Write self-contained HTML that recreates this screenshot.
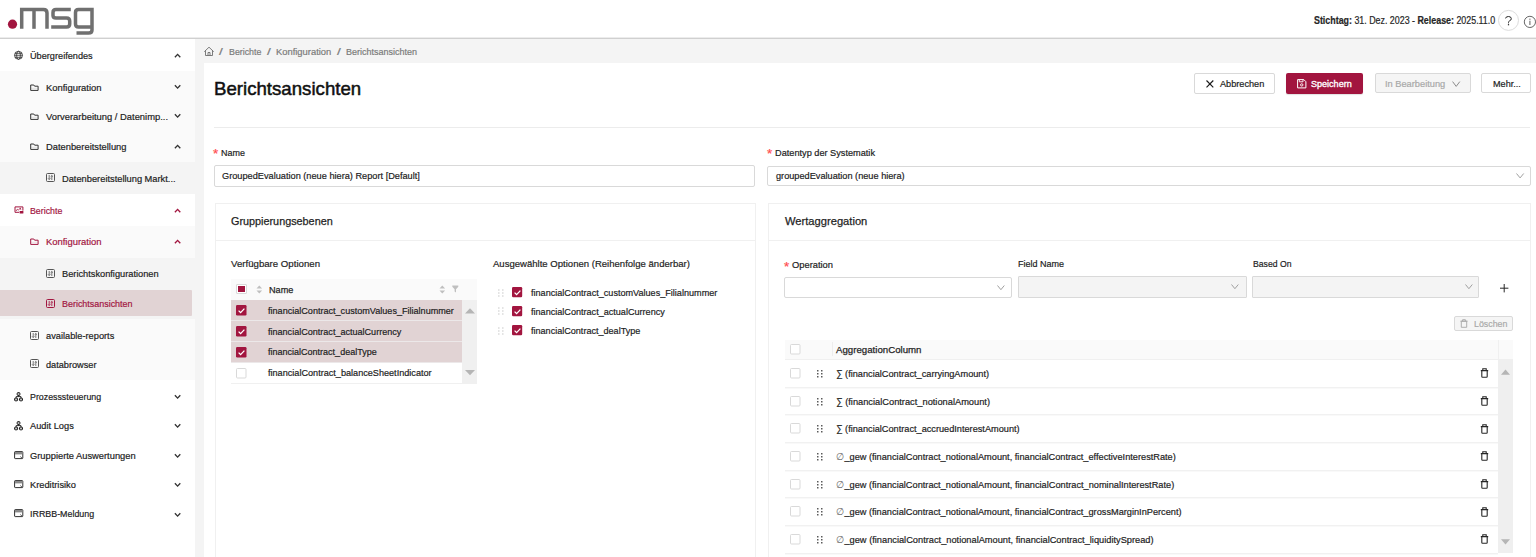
<!DOCTYPE html>
<html><head><meta charset="utf-8"><style>
html,body{margin:0;padding:0;width:1536px;height:557px;overflow:hidden;background:#fff;font-family:"Liberation Sans", sans-serif;}
span{white-space:pre;transform-origin:0 0;display:block;}
svg{overflow:visible}
</style></head><body>
<div style="position:absolute;left:0px;top:37px;width:1536px;height:1px;background:#ececec"></div><div style="position:absolute;left:0px;top:38px;width:1536px;height:1px;background:#d0d0d0"></div><div style="position:absolute;left:195px;top:39px;width:1341px;height:518px;background:#f4f4f4"></div><div style="position:absolute;left:204px;top:63px;width:1332px;height:494px;background:#fff"></div><div style="position:absolute;left:0px;top:39px;width:195px;height:518px;background:#fff"></div><svg style="position:absolute;left:0px;top:0px" width="100" height="38" viewBox="0 0 100 38">
<circle cx="12.5" cy="24.2" r="4.6" fill="#a2153f"/>
<g fill="none" stroke="#707070" stroke-width="3.5" stroke-linejoin="miter">
<path d="M21.7 28.8 V9.6 H43.5 Q47 9.6 47 13 V28.8"/>
<path d="M34 9.6 V28.8"/>
<path d="M70.8 9.6 H56 Q53 9.6 53 12.5 V15.5 Q53 18 56 18 H66.5 Q69.7 18 69.7 21 V24 Q69.7 27 66.5 27 H51.2"/>
<path d="M76.5 33.1 H88.5 Q92 33.1 92 30 V9.6 H78.5 Q75.5 9.6 75.5 12.5 V24 Q75.5 27 78.5 27 H92"/>
</g></svg><svg style="position:absolute;left:1498px;top:10px" width="21" height="21" viewBox="0 0 21 21"><circle cx="10.5" cy="10.4" r="10" fill="#fff" stroke="#dcdcdc" stroke-width="1"/><path d="M7.6 8.4 Q7.7 6.5 10.5 6.5 Q13.3 6.5 13.3 8.7 Q13.3 10.2 11.5 10.9 Q10.5 11.3 10.5 12.5 V13.3" fill="none" stroke="#262626" stroke-width="1"/><rect x="9.9" y="14.1" width="1.2" height="1.2" fill="#262626"/></svg><svg style="position:absolute;left:1523px;top:15px" width="14" height="14" viewBox="0 0 14 14"><circle cx="6.9" cy="6.9" r="5.6" fill="none" stroke="#666" stroke-width="1"/><rect x="6.3" y="5.7" width="1.2" height="4.3" fill="#777"/><rect x="6.3" y="3.6" width="1.2" height="1.2" fill="#777"/></svg><div style="position:absolute;left:0px;top:70.7px;width:195px;height:91.3px;background:#fafafa"></div><div style="position:absolute;left:0px;top:162px;width:195px;height:32.3px;background:#f4f4f4"></div><div style="position:absolute;left:0px;top:226px;width:195px;height:32px;background:#fafafa"></div><div style="position:absolute;left:0px;top:258px;width:195px;height:61px;background:#f4f4f4"></div><div style="position:absolute;left:0px;top:290px;width:191.8px;height:25.7px;background:#e1d3d4;border-radius:0 1px 1px 0"></div><div style="position:absolute;left:0px;top:319px;width:195px;height:61.4px;background:#fafafa"></div><svg style="position:absolute;left:173.8px;top:52.8px" width="7.5" height="6" viewBox="0 0 7.5 6"><path d="M0.9 4.3 L3.6 1.4 L6.3 4.3" fill="none" stroke="#333" stroke-width="1.35"/></svg><svg style="position:absolute;left:173.8px;top:83.8px" width="7.5" height="6" viewBox="0 0 7.5 6"><path d="M0.9 1.2 L3.6 4.1 L6.3 1.2" fill="none" stroke="#333" stroke-width="1.35"/></svg><svg style="position:absolute;left:173.8px;top:113.0px" width="7.5" height="6" viewBox="0 0 7.5 6"><path d="M0.9 1.2 L3.6 4.1 L6.3 1.2" fill="none" stroke="#333" stroke-width="1.35"/></svg><svg style="position:absolute;left:173.8px;top:143.8px" width="7.5" height="6" viewBox="0 0 7.5 6"><path d="M0.9 4.3 L3.6 1.4 L6.3 4.3" fill="none" stroke="#333" stroke-width="1.35"/></svg><svg style="position:absolute;left:173.8px;top:207.8px" width="7.5" height="6" viewBox="0 0 7.5 6"><path d="M0.9 4.3 L3.6 1.4 L6.3 4.3" fill="none" stroke="#a2153f" stroke-width="1.35"/></svg><svg style="position:absolute;left:173.8px;top:239.3px" width="7.5" height="6" viewBox="0 0 7.5 6"><path d="M0.9 4.3 L3.6 1.4 L6.3 4.3" fill="none" stroke="#a2153f" stroke-width="1.35"/></svg><svg style="position:absolute;left:173.8px;top:393.8px" width="7.5" height="6" viewBox="0 0 7.5 6"><path d="M0.9 1.2 L3.6 4.1 L6.3 1.2" fill="none" stroke="#333" stroke-width="1.35"/></svg><svg style="position:absolute;left:173.8px;top:423.3px" width="7.5" height="6" viewBox="0 0 7.5 6"><path d="M0.9 1.2 L3.6 4.1 L6.3 1.2" fill="none" stroke="#333" stroke-width="1.35"/></svg><svg style="position:absolute;left:173.8px;top:453.0px" width="7.5" height="6" viewBox="0 0 7.5 6"><path d="M0.9 1.2 L3.6 4.1 L6.3 1.2" fill="none" stroke="#333" stroke-width="1.35"/></svg><svg style="position:absolute;left:173.8px;top:482.3px" width="7.5" height="6" viewBox="0 0 7.5 6"><path d="M0.9 1.2 L3.6 4.1 L6.3 1.2" fill="none" stroke="#333" stroke-width="1.35"/></svg><svg style="position:absolute;left:173.8px;top:511.59999999999997px" width="7.5" height="6" viewBox="0 0 7.5 6"><path d="M0.9 1.2 L3.6 4.1 L6.3 1.2" fill="none" stroke="#333" stroke-width="1.35"/></svg><svg style="position:absolute;left:14px;top:51px" width="10" height="10" viewBox="0 0 10 10"><g fill="none" stroke="#262626" stroke-width="0.75"><circle cx="4.5" cy="4.3" r="4.0"/><ellipse cx="4.5" cy="4.3" rx="1.9" ry="4.0"/><path d="M0.5 4.3 H8.5 M0.9 2.3 H8.1 M0.9 6.3 H8.1"/></g></svg><svg style="position:absolute;left:30.2px;top:83.6px" width="10" height="8" viewBox="0 0 10 8"><path d="M0.7 1 H3.8 L4.6 2.2 H8.1 V6.4 H0.7 Z" fill="none" stroke="#333" stroke-width="1" stroke-linejoin="round"/><path d="M1.2 4.3 H7.6" stroke="#333" stroke-opacity="0.15" stroke-width="0.8"/></svg><svg style="position:absolute;left:30.2px;top:112.8px" width="10" height="8" viewBox="0 0 10 8"><path d="M0.7 1 H3.8 L4.6 2.2 H8.1 V6.4 H0.7 Z" fill="none" stroke="#333" stroke-width="1" stroke-linejoin="round"/><path d="M1.2 4.3 H7.6" stroke="#333" stroke-opacity="0.15" stroke-width="0.8"/></svg><svg style="position:absolute;left:30.2px;top:143px" width="10" height="8" viewBox="0 0 10 8"><path d="M0.7 1 H3.8 L4.6 2.2 H8.1 V6.4 H0.7 Z" fill="none" stroke="#333" stroke-width="1" stroke-linejoin="round"/><path d="M1.2 4.3 H7.6" stroke="#333" stroke-opacity="0.15" stroke-width="0.8"/></svg><svg style="position:absolute;left:30.2px;top:238px" width="10" height="8" viewBox="0 0 10 8"><path d="M0.7 1 H3.8 L4.6 2.2 H8.1 V6.4 H0.7 Z" fill="none" stroke="#a2153f" stroke-width="1" stroke-linejoin="round"/><path d="M1.2 4.3 H7.6" stroke="#a2153f" stroke-opacity="0.15" stroke-width="0.8"/></svg><svg style="position:absolute;left:46.3px;top:173.2px" width="9" height="9" viewBox="0 0 9 9"><rect x="0.5" y="0.5" width="8" height="8" rx="1" fill="none" stroke="#555" stroke-width="1"/><path d="M3.2 2 V6.5 M2 5.3 L3.2 6.5 L4.4 5.3 M5.8 7 V2.5 M4.6 3.7 L5.8 2.5 L7 3.7" fill="none" stroke="#555" stroke-width="0.8"/></svg><svg style="position:absolute;left:46.3px;top:269.2px" width="9" height="9" viewBox="0 0 9 9"><rect x="0.5" y="0.5" width="8" height="8" rx="1" fill="none" stroke="#555" stroke-width="1"/><path d="M3.2 2 V6.5 M2 5.3 L3.2 6.5 L4.4 5.3 M5.8 7 V2.5 M4.6 3.7 L5.8 2.5 L7 3.7" fill="none" stroke="#555" stroke-width="0.8"/></svg><svg style="position:absolute;left:46.3px;top:298.6px" width="9" height="9" viewBox="0 0 9 9"><rect x="0.5" y="0.5" width="8" height="8" rx="1" fill="none" stroke="#a2153f" stroke-width="1"/><path d="M3.2 2 V6.5 M2 5.3 L3.2 6.5 L4.4 5.3 M5.8 7 V2.5 M4.6 3.7 L5.8 2.5 L7 3.7" fill="none" stroke="#a2153f" stroke-width="0.8"/></svg><svg style="position:absolute;left:30.2px;top:330.6px" width="9" height="9" viewBox="0 0 9 9"><rect x="0.5" y="0.5" width="8" height="8" rx="1" fill="none" stroke="#555" stroke-width="1"/><path d="M3.2 2 V6.5 M2 5.3 L3.2 6.5 L4.4 5.3 M5.8 7 V2.5 M4.6 3.7 L5.8 2.5 L7 3.7" fill="none" stroke="#555" stroke-width="0.8"/></svg><svg style="position:absolute;left:30.2px;top:359.4px" width="9" height="9" viewBox="0 0 9 9"><rect x="0.5" y="0.5" width="8" height="8" rx="1" fill="none" stroke="#555" stroke-width="1"/><path d="M3.2 2 V6.5 M2 5.3 L3.2 6.5 L4.4 5.3 M5.8 7 V2.5 M4.6 3.7 L5.8 2.5 L7 3.7" fill="none" stroke="#555" stroke-width="0.8"/></svg><svg style="position:absolute;left:13.5px;top:205.5px" width="10" height="8" viewBox="0 0 10 8"><path d="M5 6.3 H1 V0.9 H8.9 V4.6" fill="none" stroke="#a2153f" stroke-width="1"/><path d="M2 5 L3.3 3.2 L4.4 4.2 L6.4 1.9 L6.8 3.8" fill="none" stroke="#a2153f" stroke-width="0.8"/><rect x="5.6" y="4.9" width="3.8" height="2.6" rx="0.6" fill="#a2153f"/></svg><svg style="position:absolute;left:14px;top:391.9px" width="10" height="10" viewBox="0 0 10 10"><g fill="#bbb" stroke="#1c1c1c" stroke-width="1"><rect x="3.2" y="0.6" width="2.7" height="2.9" rx="0.9"/><rect x="0.6" y="6.1" width="3" height="2.7" rx="0.7"/><rect x="5.5" y="6.1" width="3" height="2.7" rx="0.7"/></g><path d="M4.55 3.5 V4.6 M2.1 6.1 V4.6 H7 V6.1" fill="none" stroke="#1c1c1c" stroke-width="0.9"/></svg><svg style="position:absolute;left:14px;top:421.3px" width="10" height="10" viewBox="0 0 10 10"><g fill="#bbb" stroke="#1c1c1c" stroke-width="1"><rect x="3.2" y="0.6" width="2.7" height="2.9" rx="0.9"/><rect x="0.6" y="6.1" width="3" height="2.7" rx="0.7"/><rect x="5.5" y="6.1" width="3" height="2.7" rx="0.7"/></g><path d="M4.55 3.5 V4.6 M2.1 6.1 V4.6 H7 V6.1" fill="none" stroke="#1c1c1c" stroke-width="0.9"/></svg><svg style="position:absolute;left:13.8px;top:450.8px" width="10" height="9" viewBox="0 0 10 9"><rect x="0.6" y="0.6" width="8.2" height="7" rx="0.6" fill="none" stroke="#262626" stroke-width="0.95"/><rect x="1" y="1" width="7.4" height="2.4" fill="#8a8a8a"/><path d="M6.3 5.6 L8.3 7.4" fill="none" stroke="#555" stroke-width="1"/></svg><svg style="position:absolute;left:13.8px;top:480px" width="10" height="9" viewBox="0 0 10 9"><rect x="0.6" y="0.6" width="8.2" height="7" rx="0.6" fill="none" stroke="#262626" stroke-width="0.95"/><rect x="1" y="1" width="7.4" height="2.4" fill="#8a8a8a"/><path d="M6.3 5.6 L8.3 7.4" fill="none" stroke="#555" stroke-width="1"/></svg><svg style="position:absolute;left:13.8px;top:509.2px" width="10" height="9" viewBox="0 0 10 9"><rect x="0.6" y="0.6" width="8.2" height="7" rx="0.6" fill="none" stroke="#262626" stroke-width="0.95"/><rect x="1" y="1" width="7.4" height="2.4" fill="#8a8a8a"/><path d="M6.3 5.6 L8.3 7.4" fill="none" stroke="#555" stroke-width="1"/></svg><svg style="position:absolute;left:203px;top:46px" width="12" height="11" viewBox="0 0 12 11"><path d="M1.3 5.7 L6 1.2 L10.7 5.7 M2.5 4.6 V9.5 H9.5 V4.6 M5 9.5 V6.5 H7 V9.5" fill="none" stroke="#666" stroke-width="0.85" stroke-linejoin="round"/></svg><div style="position:absolute;left:1194px;top:73px;width:81px;height:20.5px;box-sizing:border-box;border:1px solid #d9d9d9;border-radius:2px;background:#fff"></div><svg style="position:absolute;left:1205.8px;top:80.2px" width="8" height="8" viewBox="0 0 8 8"><path d="M0.5 0.5 L7.3 7.3 M7.3 0.5 L0.5 7.3" stroke="#1c1c1c" stroke-width="1.2"/></svg><div style="position:absolute;left:1286.3px;top:73px;width:76.4px;height:20.5px;background:#a2153f;border-radius:2px;box-shadow:0 1px 1px rgba(0,0,0,0.12)"></div><svg style="position:absolute;left:1297px;top:79px" width="9.5" height="9.5" viewBox="0 0 9.5 9.5"><path d="M0.6 0.6 H6.8 L8.9 2.7 V8.9 H0.6 Z" fill="none" stroke="#fff" stroke-width="1"/><path d="M2.3 0.6 V2.8 H6 V0.6" fill="none" stroke="#fff" stroke-width="0.9"/><circle cx="4.75" cy="5.9" r="1.2" fill="none" stroke="#fff" stroke-width="0.9"/></svg><div style="position:absolute;left:1374.5px;top:73.4px;width:96.1px;height:20px;box-sizing:border-box;border:1px solid #d9d9d9;border-radius:2px;background:#f5f5f5"></div><svg style="position:absolute;left:1451.6px;top:80.8px" width="8.5" height="6.5" viewBox="0 0 8.5 6.5"><path d="M0.6 0.6 L4.2 5.4 L7.8 0.6" fill="none" stroke="#8c8c8c" stroke-width="1"/></svg><div style="position:absolute;left:1481.4px;top:73.4px;width:49.3px;height:20px;box-sizing:border-box;border:1px solid #d9d9d9;border-radius:2px;background:#fff"></div><div style="position:absolute;left:214px;top:127px;width:1316px;height:1px;background:#ececec"></div><div style="position:absolute;left:214.4px;top:165.3px;width:541.1px;height:21.3px;box-sizing:border-box;border:1px solid #d9d9d9;border-radius:2px;background:#fff"></div><div style="position:absolute;left:767.2px;top:165.5px;width:763.5px;height:20.1px;box-sizing:border-box;border:1px solid #d9d9d9;border-radius:2px;background:#fff"></div><svg style="position:absolute;left:1515.8px;top:172.8px" width="8.2" height="6" viewBox="0 0 8.2 6"><path d="M0.5 0.5 L4.1 4.9 L7.7 0.5" fill="none" stroke="#a0a0a0" stroke-width="1"/></svg><div style="position:absolute;left:214.5px;top:203.4px;width:541.2px;height:360px;box-sizing:border-box;border:1px solid #f0f0f0;background:#fff"></div><div style="position:absolute;left:214.5px;top:240.2px;width:541.2px;height:1px;background:#f0f0f0"></div><div style="position:absolute;left:767.5px;top:203.4px;width:763.3px;height:360px;box-sizing:border-box;border:1px solid #f0f0f0;background:#fff"></div><div style="position:absolute;left:767.5px;top:240.2px;width:763.3px;height:1px;background:#f0f0f0"></div><div style="position:absolute;left:230.9px;top:279.3px;width:246.1px;height:20.5px;background:#fafafa"></div><div style="position:absolute;left:236.1px;top:284.2px;width:11px;height:10px;box-sizing:border-box;border:1px solid #d9d9d9;border-radius:1px;background:#fff"></div><div style="position:absolute;left:238.3px;top:286.3px;width:6.6px;height:5.8px;background:#a2153f"></div><svg style="position:absolute;left:255.6px;top:284.6px" width="7" height="10" viewBox="0 0 7 10"><path d="M0.5 3.6 L3.3 0.6 L6.1 3.6 Z M0.5 5.6 L3.3 8.6 L6.1 5.6 Z" fill="#bfbfbf"/></svg><svg style="position:absolute;left:439.2px;top:284.6px" width="7" height="10" viewBox="0 0 7 10"><path d="M0.5 3.6 L3.3 0.6 L6.1 3.6 Z M0.5 5.6 L3.3 8.6 L6.1 5.6 Z" fill="#bfbfbf"/></svg><svg style="position:absolute;left:452.2px;top:285.2px" width="7" height="8" viewBox="0 0 7 8"><path d="M0.3 0.5 H6.3 V1.8 L4 4.3 V7.5 L2.6 6.6 V4.3 L0.3 1.8 Z" fill="#bfbfbf"/></svg><div style="position:absolute;left:230.9px;top:299.8px;width:231.1px;height:20.0px;background:#e1d3d4"></div><div style="position:absolute;left:230.9px;top:319.8px;width:231.1px;height:1.2px;background:#ece8e9"></div><svg style="position:absolute;left:236.1px;top:304.8px" width="10.5" height="10.5" viewBox="0 0 10.5 10.5"><rect x="0" y="0" width="10.5" height="10.5" rx="1.2" fill="#a2153f"/><path d="M2.6 5.6 L4.6 7.6 L8.4 3.6" fill="none" stroke="#fff" stroke-width="1.3"/></svg><div style="position:absolute;left:230.9px;top:320.8px;width:231.1px;height:19.80000000000001px;background:#e1d3d4"></div><div style="position:absolute;left:230.9px;top:340.6px;width:231.1px;height:1.2px;background:#ece8e9"></div><svg style="position:absolute;left:236.1px;top:325.70000000000005px" width="10.5" height="10.5" viewBox="0 0 10.5 10.5"><rect x="0" y="0" width="10.5" height="10.5" rx="1.2" fill="#a2153f"/><path d="M2.6 5.6 L4.6 7.6 L8.4 3.6" fill="none" stroke="#fff" stroke-width="1.3"/></svg><div style="position:absolute;left:230.9px;top:341.6px;width:231.1px;height:20.0px;background:#e1d3d4"></div><div style="position:absolute;left:230.9px;top:361.6px;width:231.1px;height:1.2px;background:#ece8e9"></div><svg style="position:absolute;left:236.1px;top:346.6px" width="10.5" height="10.5" viewBox="0 0 10.5 10.5"><rect x="0" y="0" width="10.5" height="10.5" rx="1.2" fill="#a2153f"/><path d="M2.6 5.6 L4.6 7.6 L8.4 3.6" fill="none" stroke="#fff" stroke-width="1.3"/></svg><div style="position:absolute;left:230.9px;top:362.6px;width:231.1px;height:20.19999999999999px;background:#fff"></div><div style="position:absolute;left:230.9px;top:382.8px;width:231.1px;height:1.2px;background:#f0f0f0"></div><svg style="position:absolute;left:236.1px;top:367.70000000000005px" width="10.5" height="10.5" viewBox="0 0 10.5 10.5"><rect x="0.5" y="0.5" width="9.5" height="9.5" rx="1" fill="#fff" stroke="#d9d9d9" stroke-width="1"/></svg><div style="position:absolute;left:462px;top:299.8px;width:15px;height:83.9px;background:#f0f0f0"></div><svg style="position:absolute;left:463.5px;top:307px" width="12" height="8" viewBox="0 0 12 8"><path d="M1 6.5 L6 1.2 L11 6.5 Z" fill="#b5b5b5"/></svg><svg style="position:absolute;left:463.5px;top:368.5px" width="12" height="8" viewBox="0 0 12 8"><path d="M1 1 L6 6.3 L11 1 Z" fill="#b5b5b5"/></svg><svg style="position:absolute;left:497.8px;top:288.5px" width="6" height="8" viewBox="0 0 6 8"><g fill="#c8c8c8"><rect x="0.3" y="0.3" width="1.1" height="1.4"/><rect x="4.3" y="0.3" width="1.1" height="1.4"/><rect x="0.3" y="3.3" width="1.1" height="1.4"/><rect x="4.3" y="3.3" width="1.1" height="1.4"/><rect x="0.3" y="6.3" width="1.1" height="1.4"/><rect x="4.3" y="6.3" width="1.1" height="1.4"/></g></svg><svg style="position:absolute;left:512px;top:287.2px" width="10.2" height="10.2" viewBox="0 0 10.2 10.2"><rect x="0" y="0" width="10.2" height="10.2" rx="1.2" fill="#a2153f"/><path d="M2.6 5.6 L4.6 7.6 L8.4 3.6" fill="none" stroke="#fff" stroke-width="1.3"/></svg><svg style="position:absolute;left:497.8px;top:307.4px" width="6" height="8" viewBox="0 0 6 8"><g fill="#c8c8c8"><rect x="0.3" y="0.3" width="1.1" height="1.4"/><rect x="4.3" y="0.3" width="1.1" height="1.4"/><rect x="0.3" y="3.3" width="1.1" height="1.4"/><rect x="4.3" y="3.3" width="1.1" height="1.4"/><rect x="0.3" y="6.3" width="1.1" height="1.4"/><rect x="4.3" y="6.3" width="1.1" height="1.4"/></g></svg><svg style="position:absolute;left:512px;top:306.09999999999997px" width="10.2" height="10.2" viewBox="0 0 10.2 10.2"><rect x="0" y="0" width="10.2" height="10.2" rx="1.2" fill="#a2153f"/><path d="M2.6 5.6 L4.6 7.6 L8.4 3.6" fill="none" stroke="#fff" stroke-width="1.3"/></svg><svg style="position:absolute;left:497.8px;top:326.7px" width="6" height="8" viewBox="0 0 6 8"><g fill="#c8c8c8"><rect x="0.3" y="0.3" width="1.1" height="1.4"/><rect x="4.3" y="0.3" width="1.1" height="1.4"/><rect x="0.3" y="3.3" width="1.1" height="1.4"/><rect x="4.3" y="3.3" width="1.1" height="1.4"/><rect x="0.3" y="6.3" width="1.1" height="1.4"/><rect x="4.3" y="6.3" width="1.1" height="1.4"/></g></svg><svg style="position:absolute;left:512px;top:325.4px" width="10.2" height="10.2" viewBox="0 0 10.2 10.2"><rect x="0" y="0" width="10.2" height="10.2" rx="1.2" fill="#a2153f"/><path d="M2.6 5.6 L4.6 7.6 L8.4 3.6" fill="none" stroke="#fff" stroke-width="1.3"/></svg><div style="position:absolute;left:784.4px;top:277.2px;width:228px;height:20.6px;box-sizing:border-box;border:1px solid #d9d9d9;border-radius:2px;background:#fff"></div><svg style="position:absolute;left:997.2px;top:284.6px" width="8" height="6" viewBox="0 0 8 6"><path d="M0.5 0.5 L3.9 4.7 L7.3 0.5" fill="none" stroke="#a0a0a0" stroke-width="1"/></svg><div style="position:absolute;left:1018.3px;top:276.2px;width:228.4px;height:21.6px;box-sizing:border-box;border:1px solid #d9d9d9;border-radius:1px;background:#f4f4f4"></div><svg style="position:absolute;left:1231px;top:284.3px" width="8" height="6" viewBox="0 0 8 6"><path d="M0.5 0.5 L3.9 4.7 L7.3 0.5" fill="none" stroke="#a0a0a0" stroke-width="1"/></svg><div style="position:absolute;left:1252.3px;top:276.2px;width:227.2px;height:21.5px;box-sizing:border-box;border:1px solid #d9d9d9;border-radius:1px;background:#f4f4f4"></div><svg style="position:absolute;left:1464.5px;top:284.3px" width="8" height="6" viewBox="0 0 8 6"><path d="M0.5 0.5 L3.9 4.7 L7.3 0.5" fill="none" stroke="#a0a0a0" stroke-width="1"/></svg><svg style="position:absolute;left:1499.6px;top:284px" width="8.4" height="8.4" viewBox="0 0 8.4 8.4"><path d="M4.2 0 V8.4 M0 4.2 H8.4" stroke="#262626" stroke-width="1"/></svg><div style="position:absolute;left:1454.3px;top:315.5px;width:58.3px;height:15.2px;box-sizing:border-box;border:1px solid #d9d9d9;border-radius:2px;background:#f5f5f5"></div><svg style="position:absolute;left:1460px;top:318.5px" width="8" height="9" viewBox="0 0 8 9"><path d="M1.3 2.2 H6.7 V8.3 H1.3 Z M0.4 2.2 H7.6 M2.6 2.2 V0.7 H5.4 V2.2" fill="none" stroke="#a8a8a8" stroke-width="0.9"/></svg><div style="position:absolute;left:785px;top:339.6px;width:727.7px;height:19.8px;background:#fafafa"></div><div style="position:absolute;left:785px;top:359px;width:713px;height:1px;background:#f0f0f0"></div><div style="position:absolute;left:832.3px;top:342.2px;width:1px;height:14px;background:#ededed"></div><div style="position:absolute;left:1497.7px;top:339.6px;width:1px;height:19.8px;background:#f0f0f0"></div><svg style="position:absolute;left:790.2px;top:344.1px" width="10.5" height="10.5" viewBox="0 0 10.5 10.5"><rect x="0.5" y="0.5" width="9.5" height="9.5" rx="1" fill="#fff" stroke="#d9d9d9" stroke-width="1"/></svg><div style="position:absolute;left:785px;top:387px;width:713px;height:1px;background:#f1f1f1"></div><div style="position:absolute;left:785px;top:388px;width:713px;height:1px;background:#f9f9f9"></div><svg style="position:absolute;left:790.2px;top:368.03px" width="10.5" height="10.5" viewBox="0 0 10.5 10.5"><rect x="0.5" y="0.5" width="9.5" height="9.5" rx="1" fill="#fff" stroke="#d9d9d9" stroke-width="1"/></svg><svg style="position:absolute;left:816.8px;top:369.92999999999995px" width="6" height="8" viewBox="0 0 6 8"><g fill="#333"><rect x="0.2" y="0" width="1.2" height="1.5"/><rect x="4.2" y="0" width="1.2" height="1.5"/><rect x="0.2" y="3" width="1.2" height="1.5"/><rect x="4.2" y="3" width="1.2" height="1.5"/><rect x="0.2" y="6" width="1.2" height="1.5"/><rect x="4.2" y="6" width="1.2" height="1.5"/></g></svg><svg style="position:absolute;left:1480.4px;top:368.42999999999995px" width="9" height="10" viewBox="0 0 9 10"><path d="M1.8 2.6 H7.2 V8.6 Q7.2 9.3 6.5 9.3 H2.5 Q1.8 9.3 1.8 8.6 Z M0.8 2.6 H8.2 M2.8 2.6 V0.8 H6.2 V2.6" fill="none" stroke="#262626" stroke-width="1.1"/></svg><div style="position:absolute;left:785px;top:414px;width:713px;height:1px;background:#f1f1f1"></div><div style="position:absolute;left:785px;top:415px;width:713px;height:1px;background:#f9f9f9"></div><svg style="position:absolute;left:790.2px;top:395.69px" width="10.5" height="10.5" viewBox="0 0 10.5 10.5"><rect x="0.5" y="0.5" width="9.5" height="9.5" rx="1" fill="#fff" stroke="#d9d9d9" stroke-width="1"/></svg><svg style="position:absolute;left:816.8px;top:397.59px" width="6" height="8" viewBox="0 0 6 8"><g fill="#333"><rect x="0.2" y="0" width="1.2" height="1.5"/><rect x="4.2" y="0" width="1.2" height="1.5"/><rect x="0.2" y="3" width="1.2" height="1.5"/><rect x="4.2" y="3" width="1.2" height="1.5"/><rect x="0.2" y="6" width="1.2" height="1.5"/><rect x="4.2" y="6" width="1.2" height="1.5"/></g></svg><svg style="position:absolute;left:1480.4px;top:396.09px" width="9" height="10" viewBox="0 0 9 10"><path d="M1.8 2.6 H7.2 V8.6 Q7.2 9.3 6.5 9.3 H2.5 Q1.8 9.3 1.8 8.6 Z M0.8 2.6 H8.2 M2.8 2.6 V0.8 H6.2 V2.6" fill="none" stroke="#262626" stroke-width="1.1"/></svg><div style="position:absolute;left:785px;top:442px;width:713px;height:1px;background:#f1f1f1"></div><div style="position:absolute;left:785px;top:443px;width:713px;height:1px;background:#f9f9f9"></div><svg style="position:absolute;left:790.2px;top:423.34999999999997px" width="10.5" height="10.5" viewBox="0 0 10.5 10.5"><rect x="0.5" y="0.5" width="9.5" height="9.5" rx="1" fill="#fff" stroke="#d9d9d9" stroke-width="1"/></svg><svg style="position:absolute;left:816.8px;top:425.24999999999994px" width="6" height="8" viewBox="0 0 6 8"><g fill="#333"><rect x="0.2" y="0" width="1.2" height="1.5"/><rect x="4.2" y="0" width="1.2" height="1.5"/><rect x="0.2" y="3" width="1.2" height="1.5"/><rect x="4.2" y="3" width="1.2" height="1.5"/><rect x="0.2" y="6" width="1.2" height="1.5"/><rect x="4.2" y="6" width="1.2" height="1.5"/></g></svg><svg style="position:absolute;left:1480.4px;top:423.74999999999994px" width="9" height="10" viewBox="0 0 9 10"><path d="M1.8 2.6 H7.2 V8.6 Q7.2 9.3 6.5 9.3 H2.5 Q1.8 9.3 1.8 8.6 Z M0.8 2.6 H8.2 M2.8 2.6 V0.8 H6.2 V2.6" fill="none" stroke="#262626" stroke-width="1.1"/></svg><div style="position:absolute;left:785px;top:470px;width:713px;height:1px;background:#f1f1f1"></div><div style="position:absolute;left:785px;top:471px;width:713px;height:1px;background:#f9f9f9"></div><svg style="position:absolute;left:790.2px;top:451.01px" width="10.5" height="10.5" viewBox="0 0 10.5 10.5"><rect x="0.5" y="0.5" width="9.5" height="9.5" rx="1" fill="#fff" stroke="#d9d9d9" stroke-width="1"/></svg><svg style="position:absolute;left:816.8px;top:452.90999999999997px" width="6" height="8" viewBox="0 0 6 8"><g fill="#333"><rect x="0.2" y="0" width="1.2" height="1.5"/><rect x="4.2" y="0" width="1.2" height="1.5"/><rect x="0.2" y="3" width="1.2" height="1.5"/><rect x="4.2" y="3" width="1.2" height="1.5"/><rect x="0.2" y="6" width="1.2" height="1.5"/><rect x="4.2" y="6" width="1.2" height="1.5"/></g></svg><svg style="position:absolute;left:1480.4px;top:451.40999999999997px" width="9" height="10" viewBox="0 0 9 10"><path d="M1.8 2.6 H7.2 V8.6 Q7.2 9.3 6.5 9.3 H2.5 Q1.8 9.3 1.8 8.6 Z M0.8 2.6 H8.2 M2.8 2.6 V0.8 H6.2 V2.6" fill="none" stroke="#262626" stroke-width="1.1"/></svg><div style="position:absolute;left:785px;top:497px;width:713px;height:1px;background:#f1f1f1"></div><div style="position:absolute;left:785px;top:498px;width:713px;height:1px;background:#f9f9f9"></div><svg style="position:absolute;left:790.2px;top:478.66999999999996px" width="10.5" height="10.5" viewBox="0 0 10.5 10.5"><rect x="0.5" y="0.5" width="9.5" height="9.5" rx="1" fill="#fff" stroke="#d9d9d9" stroke-width="1"/></svg><svg style="position:absolute;left:816.8px;top:480.56999999999994px" width="6" height="8" viewBox="0 0 6 8"><g fill="#333"><rect x="0.2" y="0" width="1.2" height="1.5"/><rect x="4.2" y="0" width="1.2" height="1.5"/><rect x="0.2" y="3" width="1.2" height="1.5"/><rect x="4.2" y="3" width="1.2" height="1.5"/><rect x="0.2" y="6" width="1.2" height="1.5"/><rect x="4.2" y="6" width="1.2" height="1.5"/></g></svg><svg style="position:absolute;left:1480.4px;top:479.06999999999994px" width="9" height="10" viewBox="0 0 9 10"><path d="M1.8 2.6 H7.2 V8.6 Q7.2 9.3 6.5 9.3 H2.5 Q1.8 9.3 1.8 8.6 Z M0.8 2.6 H8.2 M2.8 2.6 V0.8 H6.2 V2.6" fill="none" stroke="#262626" stroke-width="1.1"/></svg><div style="position:absolute;left:785px;top:525px;width:713px;height:1px;background:#f1f1f1"></div><div style="position:absolute;left:785px;top:526px;width:713px;height:1px;background:#f9f9f9"></div><svg style="position:absolute;left:790.2px;top:506.33px" width="10.5" height="10.5" viewBox="0 0 10.5 10.5"><rect x="0.5" y="0.5" width="9.5" height="9.5" rx="1" fill="#fff" stroke="#d9d9d9" stroke-width="1"/></svg><svg style="position:absolute;left:816.8px;top:508.22999999999996px" width="6" height="8" viewBox="0 0 6 8"><g fill="#333"><rect x="0.2" y="0" width="1.2" height="1.5"/><rect x="4.2" y="0" width="1.2" height="1.5"/><rect x="0.2" y="3" width="1.2" height="1.5"/><rect x="4.2" y="3" width="1.2" height="1.5"/><rect x="0.2" y="6" width="1.2" height="1.5"/><rect x="4.2" y="6" width="1.2" height="1.5"/></g></svg><svg style="position:absolute;left:1480.4px;top:506.72999999999996px" width="9" height="10" viewBox="0 0 9 10"><path d="M1.8 2.6 H7.2 V8.6 Q7.2 9.3 6.5 9.3 H2.5 Q1.8 9.3 1.8 8.6 Z M0.8 2.6 H8.2 M2.8 2.6 V0.8 H6.2 V2.6" fill="none" stroke="#262626" stroke-width="1.1"/></svg><div style="position:absolute;left:785px;top:553px;width:713px;height:1px;background:#f1f1f1"></div><div style="position:absolute;left:785px;top:554px;width:713px;height:1px;background:#f9f9f9"></div><svg style="position:absolute;left:790.2px;top:533.99px" width="10.5" height="10.5" viewBox="0 0 10.5 10.5"><rect x="0.5" y="0.5" width="9.5" height="9.5" rx="1" fill="#fff" stroke="#d9d9d9" stroke-width="1"/></svg><svg style="position:absolute;left:816.8px;top:535.8900000000001px" width="6" height="8" viewBox="0 0 6 8"><g fill="#333"><rect x="0.2" y="0" width="1.2" height="1.5"/><rect x="4.2" y="0" width="1.2" height="1.5"/><rect x="0.2" y="3" width="1.2" height="1.5"/><rect x="4.2" y="3" width="1.2" height="1.5"/><rect x="0.2" y="6" width="1.2" height="1.5"/><rect x="4.2" y="6" width="1.2" height="1.5"/></g></svg><svg style="position:absolute;left:1480.4px;top:534.3900000000001px" width="9" height="10" viewBox="0 0 9 10"><path d="M1.8 2.6 H7.2 V8.6 Q7.2 9.3 6.5 9.3 H2.5 Q1.8 9.3 1.8 8.6 Z M0.8 2.6 H8.2 M2.8 2.6 V0.8 H6.2 V2.6" fill="none" stroke="#262626" stroke-width="1.1"/></svg><div style="position:absolute;left:1498.2px;top:359.4px;width:14.5px;height:193.6px;background:#efefef"></div><svg style="position:absolute;left:1500px;top:367.6px" width="11" height="8" viewBox="0 0 11 8"><path d="M1 6.8 L5.5 1.5 L10 6.8 Z" fill="#b5b5b5"/></svg><svg style="position:absolute;left:1500px;top:537.6px" width="11" height="8" viewBox="0 0 11 8"><path d="M1 1.2 L5.5 6.5 L10 1.2 Z" fill="#b5b5b5"/></svg>
<span id="t0" style="position:absolute;left:1313.8px;top:16.00px;font-size:10px;line-height:10px;font-weight:400;color:#262626;transform:scaleX(0.8865);-webkit-text-stroke:0.2px #262626;"><b>Stichtag:</b> 31. Dez. 2023 - <b>Release:</b> 2025.11.0</span><span id="t1" style="position:absolute;left:30px;top:51.00px;font-size:9.9px;line-height:9.9px;font-weight:400;color:#1c1c1c;transform:scaleX(0.9285);-webkit-text-stroke:0.2px #1c1c1c;">Übergreifendes</span><span id="t2" style="position:absolute;left:45.8px;top:83.00px;font-size:9.9px;line-height:9.9px;font-weight:400;color:#1c1c1c;transform:scaleX(0.9536);-webkit-text-stroke:0.2px #1c1c1c;">Konfiguration</span><span id="t3" style="position:absolute;left:45.8px;top:112.00px;font-size:9.9px;line-height:9.9px;font-weight:400;color:#1c1c1c;transform:scaleX(0.9498);-webkit-text-stroke:0.2px #1c1c1c;">Vorverarbeitung / Datenimp...</span><span id="t4" style="position:absolute;left:45.8px;top:142.00px;font-size:9.9px;line-height:9.9px;font-weight:400;color:#1c1c1c;transform:scaleX(0.9460);-webkit-text-stroke:0.2px #1c1c1c;">Datenbereitstellung</span><span id="t5" style="position:absolute;left:62.3px;top:174.00px;font-size:9.9px;line-height:9.9px;font-weight:400;color:#1c1c1c;transform:scaleX(0.9407);-webkit-text-stroke:0.2px #1c1c1c;">Datenbereitstellung Markt...</span><span id="t6" style="position:absolute;left:30px;top:206.00px;font-size:9.9px;line-height:9.9px;font-weight:400;color:#a2153f;transform:scaleX(0.8914);-webkit-text-stroke:0.2px #a2153f;">Berichte</span><span id="t7" style="position:absolute;left:45.8px;top:237.00px;font-size:9.9px;line-height:9.9px;font-weight:400;color:#a2153f;transform:scaleX(0.9536);-webkit-text-stroke:0.2px #a2153f;">Konfiguration</span><span id="t8" style="position:absolute;left:62.3px;top:269.00px;font-size:9.9px;line-height:9.9px;font-weight:400;color:#1c1c1c;transform:scaleX(0.9360);-webkit-text-stroke:0.2px #1c1c1c;">Berichtskonfigurationen</span><span id="t9" style="position:absolute;left:62.3px;top:299.00px;font-size:9.9px;line-height:9.9px;font-weight:400;color:#a2153f;transform:scaleX(0.9044);-webkit-text-stroke:0.2px #a2153f;">Berichtsansichten</span><span id="t10" style="position:absolute;left:45.9px;top:331.00px;font-size:9.9px;line-height:9.9px;font-weight:400;color:#1c1c1c;transform:scaleX(0.9354);-webkit-text-stroke:0.2px #1c1c1c;">available-reports</span><span id="t11" style="position:absolute;left:45.9px;top:360.00px;font-size:9.9px;line-height:9.9px;font-weight:400;color:#1c1c1c;transform:scaleX(0.9293);-webkit-text-stroke:0.2px #1c1c1c;">databrowser</span><span id="t12" style="position:absolute;left:30.2px;top:392.00px;font-size:9.9px;line-height:9.9px;font-weight:400;color:#1c1c1c;transform:scaleX(0.8933);-webkit-text-stroke:0.2px #1c1c1c;">Prozesssteuerung</span><span id="t13" style="position:absolute;left:29.8px;top:421.00px;font-size:9.9px;line-height:9.9px;font-weight:400;color:#1c1c1c;transform:scaleX(0.9385);-webkit-text-stroke:0.2px #1c1c1c;">Audit Logs</span><span id="t14" style="position:absolute;left:29.8px;top:451.00px;font-size:9.9px;line-height:9.9px;font-weight:400;color:#1c1c1c;transform:scaleX(0.9429);-webkit-text-stroke:0.2px #1c1c1c;">Gruppierte Auswertungen</span><span id="t15" style="position:absolute;left:29.8px;top:480.00px;font-size:9.9px;line-height:9.9px;font-weight:400;color:#1c1c1c;transform:scaleX(0.9397);-webkit-text-stroke:0.2px #1c1c1c;">Kreditrisiko</span><span id="t16" style="position:absolute;left:29.8px;top:509.00px;font-size:9.9px;line-height:9.9px;font-weight:400;color:#1c1c1c;transform:scaleX(0.8997);-webkit-text-stroke:0.2px #1c1c1c;">IRRBB-Meldung</span><span id="t17" style="position:absolute;left:218.9px;top:47.00px;font-size:9.8px;line-height:9.8px;font-weight:400;color:#7a7a7a;transform:scaleX(1.3897);-webkit-text-stroke:0.2px #7a7a7a;">/</span><span id="t18" style="position:absolute;left:228.6px;top:47.00px;font-size:9.8px;line-height:9.8px;font-weight:400;color:#7a7a7a;transform:scaleX(0.9012);-webkit-text-stroke:0.2px #7a7a7a;">Berichte</span><span id="t19" style="position:absolute;left:266.8px;top:47.00px;font-size:9.8px;line-height:9.8px;font-weight:400;color:#7a7a7a;transform:scaleX(1.3897);-webkit-text-stroke:0.2px #7a7a7a;">/</span><span id="t20" style="position:absolute;left:276px;top:47.00px;font-size:9.8px;line-height:9.8px;font-weight:400;color:#7a7a7a;transform:scaleX(0.9570);-webkit-text-stroke:0.2px #7a7a7a;">Konfiguration</span><span id="t21" style="position:absolute;left:337px;top:47.00px;font-size:9.8px;line-height:9.8px;font-weight:400;color:#7a7a7a;transform:scaleX(1.3897);-webkit-text-stroke:0.2px #7a7a7a;">/</span><span id="t22" style="position:absolute;left:346.3px;top:47.00px;font-size:9.8px;line-height:9.8px;font-weight:400;color:#7a7a7a;transform:scaleX(0.9182);-webkit-text-stroke:0.2px #7a7a7a;">Berichtsansichten</span><span id="t23" style="position:absolute;left:214.4px;top:79.00px;font-size:19px;line-height:19px;font-weight:400;color:#111;transform:scaleX(0.9815);-webkit-text-stroke:0.5px #111;">Berichtsansichten</span><span id="t24" style="position:absolute;left:1219.5px;top:79.00px;font-size:9.8px;line-height:9.8px;font-weight:400;color:#1c1c1c;transform:scaleX(0.9348);-webkit-text-stroke:0.2px #1c1c1c;">Abbrechen</span><span id="t25" style="position:absolute;left:1311.3px;top:79.00px;font-size:9.8px;line-height:9.8px;font-weight:400;color:#fff;transform:scaleX(0.9224);-webkit-text-stroke:0.35px #fff;">Speichern</span><span id="t26" style="position:absolute;left:1384.8px;top:79.00px;font-size:9.8px;line-height:9.8px;font-weight:400;color:#a8a8a8;transform:scaleX(0.9445);-webkit-text-stroke:0.2px #a8a8a8;">In Bearbeitung</span><span id="t27" style="position:absolute;left:1492.5px;top:79.00px;font-size:9.8px;line-height:9.8px;font-weight:400;color:#1c1c1c;transform:scaleX(0.9281);-webkit-text-stroke:0.2px #1c1c1c;">Mehr...</span><span id="t28" style="position:absolute;left:213.3px;top:148.00px;font-size:12px;line-height:12px;font-weight:400;color:#ff4d4f;transform:scaleX(1.1130);-webkit-text-stroke:0.2px #ff4d4f;">*</span><span id="t29" style="position:absolute;left:221.4px;top:148.00px;font-size:9.9px;line-height:9.9px;font-weight:400;color:#1c1c1c;transform:scaleX(0.9072);-webkit-text-stroke:0.2px #1c1c1c;">Name</span><span id="t30" style="position:absolute;left:221.9px;top:171.00px;font-size:9.9px;line-height:9.9px;font-weight:400;color:#1c1c1c;transform:scaleX(0.9315);-webkit-text-stroke:0.2px #1c1c1c;">GroupedEvaluation (neue hiera) Report [Default]</span><span id="t31" style="position:absolute;left:767.2px;top:148.00px;font-size:12px;line-height:12px;font-weight:400;color:#ff4d4f;transform:scaleX(1.1130);-webkit-text-stroke:0.2px #ff4d4f;">*</span><span id="t32" style="position:absolute;left:774.7px;top:148.00px;font-size:9.9px;line-height:9.9px;font-weight:400;color:#1c1c1c;transform:scaleX(0.9296);-webkit-text-stroke:0.2px #1c1c1c;">Datentyp der Systematik</span><span id="t33" style="position:absolute;left:775.8px;top:171.00px;font-size:9.9px;line-height:9.9px;font-weight:400;color:#1c1c1c;transform:scaleX(0.9295);-webkit-text-stroke:0.2px #1c1c1c;">groupedEvaluation (neue hiera)</span><span id="t34" style="position:absolute;left:230.9px;top:216.00px;font-size:11.2px;line-height:11.2px;font-weight:400;color:#1f1f1f;transform:scaleX(0.9674);-webkit-text-stroke:0.25px #1f1f1f;">Gruppierungsebenen</span><span id="t35" style="position:absolute;left:784.7px;top:216.00px;font-size:11.2px;line-height:11.2px;font-weight:400;color:#1f1f1f;transform:scaleX(0.9974);-webkit-text-stroke:0.25px #1f1f1f;">Wertaggregation</span><span id="t36" style="position:absolute;left:231px;top:259.00px;font-size:9.9px;line-height:9.9px;font-weight:400;color:#1c1c1c;transform:scaleX(0.9765);-webkit-text-stroke:0.2px #262626;">Verfügbare Optionen</span><span id="t37" style="position:absolute;left:493.4px;top:259.00px;font-size:9.9px;line-height:9.9px;font-weight:400;color:#1c1c1c;transform:scaleX(0.9668);-webkit-text-stroke:0.2px #262626;">Ausgewählte Optionen (Reihenfolge änderbar)</span><span id="t38" style="position:absolute;left:268.6px;top:285.00px;font-size:9.9px;line-height:9.9px;font-weight:400;color:#1c1c1c;transform:scaleX(0.9224);-webkit-text-stroke:0.25px #262626;">Name</span><span id="t39" style="position:absolute;left:268.4px;top:306.00px;font-size:9.9px;line-height:9.9px;font-weight:400;color:#1c1c1c;transform:scaleX(0.9187);-webkit-text-stroke:0.2px #1c1c1c;">financialContract_customValues_Filialnummer</span><span id="t40" style="position:absolute;left:268.4px;top:327.00px;font-size:9.9px;line-height:9.9px;font-weight:400;color:#1c1c1c;transform:scaleX(0.9163);-webkit-text-stroke:0.2px #1c1c1c;">financialContract_actualCurrency</span><span id="t41" style="position:absolute;left:268.4px;top:347.00px;font-size:9.9px;line-height:9.9px;font-weight:400;color:#1c1c1c;transform:scaleX(0.9125);-webkit-text-stroke:0.2px #1c1c1c;">financialContract_dealType</span><span id="t42" style="position:absolute;left:268.4px;top:368.00px;font-size:9.9px;line-height:9.9px;font-weight:400;color:#1c1c1c;transform:scaleX(0.9226);-webkit-text-stroke:0.2px #1c1c1c;">financialContract_balanceSheetIndicator</span><span id="t43" style="position:absolute;left:530.7px;top:288.00px;font-size:9.9px;line-height:9.9px;font-weight:400;color:#1c1c1c;transform:scaleX(0.9207);-webkit-text-stroke:0.2px #1c1c1c;">financialContract_customValues_Filialnummer</span><span id="t44" style="position:absolute;left:530.7px;top:307.00px;font-size:9.9px;line-height:9.9px;font-weight:400;color:#1c1c1c;transform:scaleX(0.9198);-webkit-text-stroke:0.2px #1c1c1c;">financialContract_actualCurrency</span><span id="t45" style="position:absolute;left:530.7px;top:326.00px;font-size:9.9px;line-height:9.9px;font-weight:400;color:#1c1c1c;transform:scaleX(0.9175);-webkit-text-stroke:0.2px #1c1c1c;">financialContract_dealType</span><span id="t46" style="position:absolute;left:784.1px;top:261.00px;font-size:12px;line-height:12px;font-weight:400;color:#ff4d4f;transform:scaleX(1.1130);-webkit-text-stroke:0.2px #ff4d4f;">*</span><span id="t47" style="position:absolute;left:791.9px;top:260.00px;font-size:9.9px;line-height:9.9px;font-weight:400;color:#1c1c1c;transform:scaleX(0.9452);-webkit-text-stroke:0.2px #1c1c1c;">Operation</span><span id="t48" style="position:absolute;left:1018.3px;top:259.00px;font-size:9.9px;line-height:9.9px;font-weight:400;color:#1c1c1c;transform:scaleX(0.9129);-webkit-text-stroke:0.2px #1c1c1c;">Field Name</span><span id="t49" style="position:absolute;left:1252.5px;top:259.00px;font-size:9.9px;line-height:9.9px;font-weight:400;color:#1c1c1c;transform:scaleX(0.8766);-webkit-text-stroke:0.2px #1c1c1c;">Based On</span><span id="t50" style="position:absolute;left:1474px;top:319.00px;font-size:9.9px;line-height:9.9px;font-weight:400;color:#a8a8a8;transform:scaleX(0.8944);-webkit-text-stroke:0.2px #a8a8a8;">Löschen</span><span id="t51" style="position:absolute;left:836px;top:345.00px;font-size:9.9px;line-height:9.9px;font-weight:400;color:#1c1c1c;transform:scaleX(0.9794);-webkit-text-stroke:0.25px #262626;">AggregationColumn</span><span id="t52" style="position:absolute;left:835.9px;top:369.00px;font-size:9.9px;line-height:9.9px;font-weight:400;color:#1c1c1c;transform:scaleX(0.9303);-webkit-text-stroke:0.2px #1c1c1c;">∑ (financialContract_carryingAmount)</span><span id="t53" style="position:absolute;left:835.9px;top:397.00px;font-size:9.9px;line-height:9.9px;font-weight:400;color:#1c1c1c;transform:scaleX(0.9388);-webkit-text-stroke:0.2px #1c1c1c;">∑ (financialContract_notionalAmount)</span><span id="t54" style="position:absolute;left:835.9px;top:424.00px;font-size:9.9px;line-height:9.9px;font-weight:400;color:#1c1c1c;transform:scaleX(0.9296);-webkit-text-stroke:0.2px #1c1c1c;">∑ (financialContract_accruedInterestAmount)</span><span id="t55" style="position:absolute;left:835.9px;top:452.00px;font-size:9.9px;line-height:9.9px;font-weight:400;color:#1c1c1c;transform:scaleX(0.9322);-webkit-text-stroke:0.2px #1c1c1c;"><span style="display:inline;color:#666;-webkit-text-stroke:0">∅</span>_gew (financialContract_notionalAmount, financialContract_effectiveInterestRate)</span><span id="t56" style="position:absolute;left:835.9px;top:480.00px;font-size:9.9px;line-height:9.9px;font-weight:400;color:#1c1c1c;transform:scaleX(0.9330);-webkit-text-stroke:0.2px #1c1c1c;"><span style="display:inline;color:#666;-webkit-text-stroke:0">∅</span>_gew (financialContract_notionalAmount, financialContract_nominalInterestRate)</span><span id="t57" style="position:absolute;left:835.9px;top:507.00px;font-size:9.9px;line-height:9.9px;font-weight:400;color:#1c1c1c;transform:scaleX(0.9322);-webkit-text-stroke:0.2px #1c1c1c;"><span style="display:inline;color:#666;-webkit-text-stroke:0">∅</span>_gew (financialContract_notionalAmount, financialContract_grossMarginInPercent)</span><span id="t58" style="position:absolute;left:835.9px;top:535.00px;font-size:9.9px;line-height:9.9px;font-weight:400;color:#1c1c1c;transform:scaleX(0.9371);-webkit-text-stroke:0.2px #1c1c1c;"><span style="display:inline;color:#666;-webkit-text-stroke:0">∅</span>_gew (financialContract_notionalAmount, financialContract_liquiditySpread)</span>
</body></html>
